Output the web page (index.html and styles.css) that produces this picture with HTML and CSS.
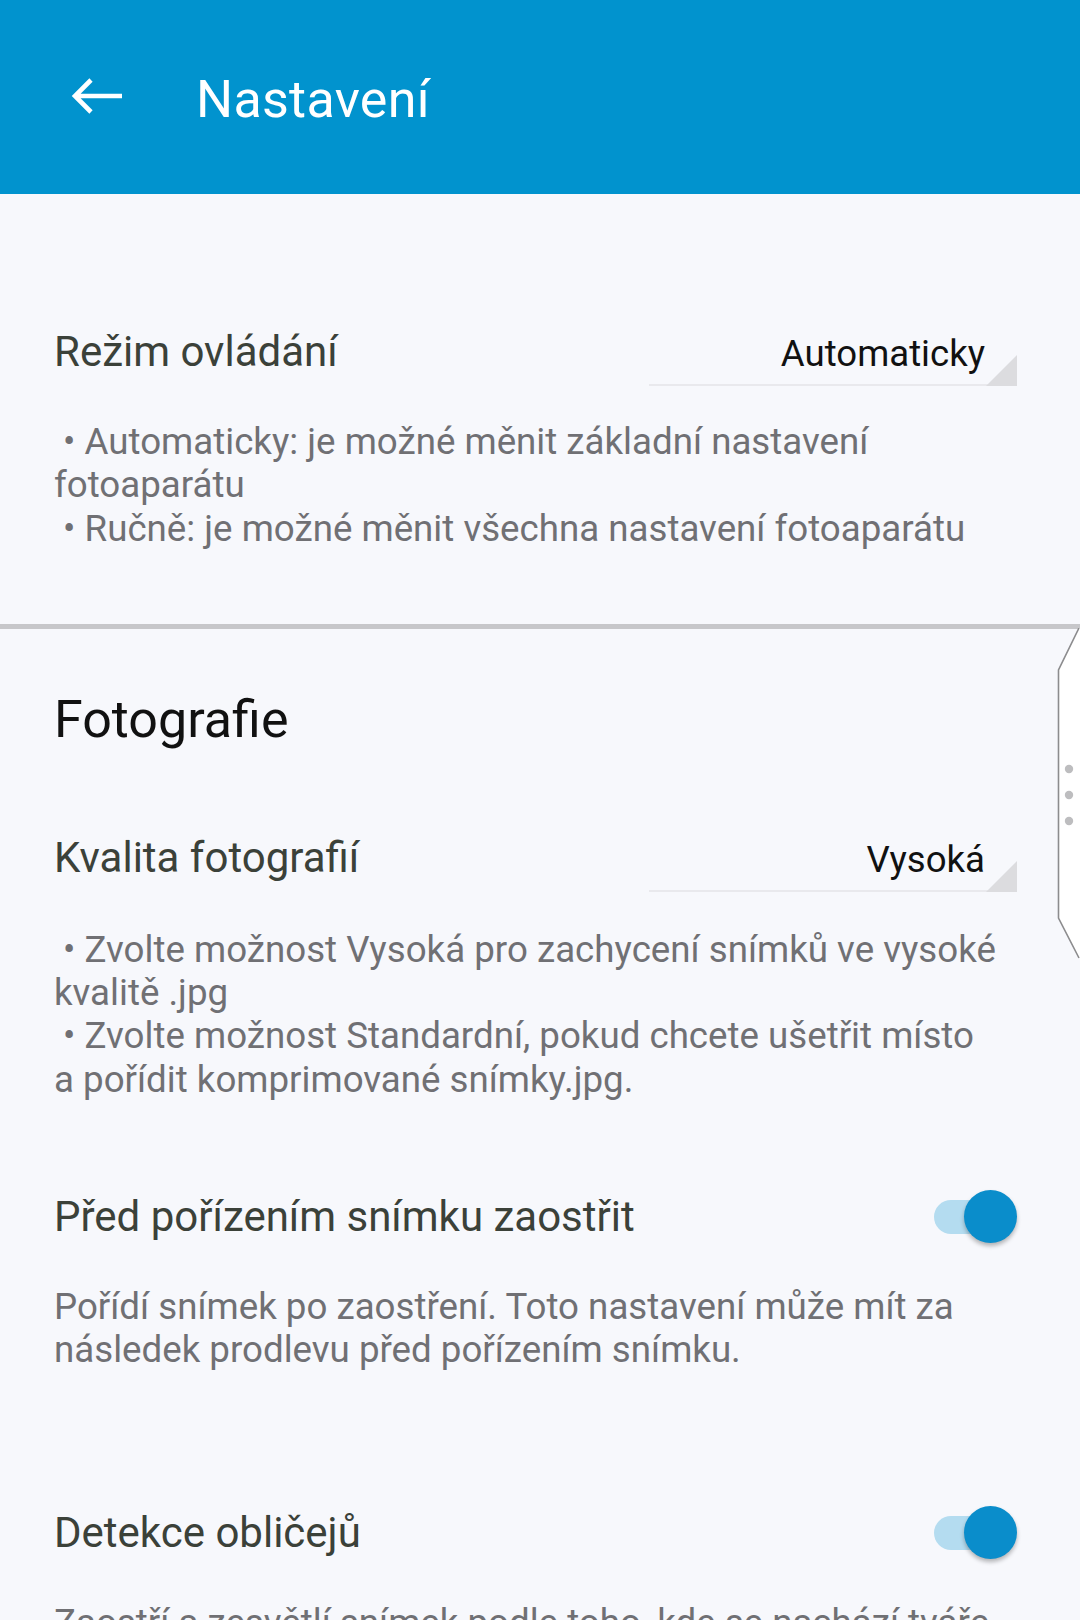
FILE: index.html
```html
<!DOCTYPE html>
<html lang="cs">
<head>
<meta charset="utf-8">
<title>Nastavení</title>
<link rel="stylesheet" href="styles.css">
</head>
<body>
<header class="appbar">
  <svg class="back" width="56" height="40" viewBox="0 0 56 40" aria-hidden="true">
    <path d="M52 20 H5 M21 4 L5 20 L21 36" fill="none" stroke="#ffffff" stroke-width="4.6" stroke-linecap="butt" stroke-linejoin="miter"/>
  </svg>
  <h1 class="title">Nastavení</h1>
</header>

<main class="content">
  <section class="block block-first">
    <div class="row row-select">
      <div class="label">Režim ovládání</div>
      <div class="select"><span class="value">Automaticky</span></div>
    </div>
    <p class="desc desc-first">&nbsp;• Automaticky: je možné měnit základní nastavení<br>fotoaparátu<br>&nbsp;• Ručně: je možné měnit všechna nastavení fotoaparátu</p>
  </section>

  <hr class="divider">

  <section class="block">
    <h2 class="heading">Fotografie</h2>
    <div class="row row-select row-after-heading">
      <div class="label">Kvalita fotografií</div>
      <div class="select"><span class="value">Vysoká</span></div>
    </div>
    <p class="desc desc-select">&nbsp;• Zvolte možnost Vysoká pro zachycení snímků ve vysoké<br>kvalitě .jpg<br>&nbsp;• Zvolte možnost Standardní, pokud chcete ušetřit místo<br>a pořídit komprimované snímky.jpg.</p>

    <div class="row row-toggle row-focus">
      <div class="label">Před pořízením snímku zaostřit</div>
      <div class="toggle"><span class="track"></span><span class="thumb"></span></div>
    </div>
    <p class="desc desc-toggle">Pořídí snímek po zaostření. Toto nastavení může mít za<br>následek prodlevu před pořízením snímku.</p>

    <div class="row row-toggle row-face">
      <div class="label">Detekce obličejů</div>
      <div class="toggle"><span class="track"></span><span class="thumb"></span></div>
    </div>
    <p class="desc desc-toggle desc-last">Zaostří a zesvětlí snímek podle toho, kde se nachází tváře</p>
  </section>
</main>

<svg class="edge-handle" width="24" height="340" viewBox="0 0 24 340" aria-hidden="true">
  <path d="M23 0 L2.5 42 L2.5 290 L23 330 L24 330 L24 0 Z" fill="#ffffff"/>
  <path d="M23 0 L2.5 42 L2.5 290 L23 330" fill="none" stroke="#8c8c8e" stroke-width="1.6"/>
  <circle cx="13" cy="141" r="4.2" fill="#bdbdbf"/>
  <circle cx="13" cy="167" r="4.2" fill="#bdbdbf"/>
  <circle cx="13" cy="193" r="4.2" fill="#bdbdbf"/>
</svg>
</body>
</html>
```

FILE: styles.css
```css
html, body {
  margin: 0;
  padding: 0;
}

body {
  width: 1080px;
  height: 1620px;
  overflow: hidden;
  background: #f7f8fc;
  font-family: Roboto, "Noto Sans", "Liberation Sans", sans-serif;
  position: relative;
}

.appbar {
  height: 194px;
  background: #0193ce;
  display: flex;
  align-items: center;
}

.back {
  display: block;
  margin-left: 70px;
  margin-top: -2px;
}

.title {
  margin: 6px 0 0 70px;
  font-size: 52px;
  font-weight: 400;
  color: #ffffff;
  line-height: 60px;
  letter-spacing: 0.3px;
}

.content {
  padding: 0;
}

.block {
  padding: 0 63px 0 54px;
}

.row {
  display: flex;
  justify-content: space-between;
}

.row-select {
  align-items: baseline;
}

.row-toggle {
  align-items: center;
}

.block-first .row-select {
  padding-top: 133px;
}

.label {
  font-size: 42px;
  line-height: 50px;
  color: #3b4139;
}

.select {
  position: relative;
  width: 336px;
  padding-right: 32px;
  padding-bottom: 8px;
  border-bottom: 2px solid #e9e9ed;
  text-align: right;
  font-size: 36.6px;
  line-height: 44px;
  color: #111111;
}

.select::after {
  content: "";
  position: absolute;
  right: 0;
  bottom: -2px;
  width: 31px;
  height: 31px;
  background: #dcdcdf;
  clip-path: polygon(100% 0, 100% 100%, 0 100%);
}

.desc {
  margin: 0;
  font-size: 36.7px;
  line-height: 43.3px;
  color: #707074;
}

.desc-first {
  margin-top: 34px;
}

.divider {
  margin: 74px 0 0 0;
  height: 5px;
  border: 0;
  background: #c7c7ca;
}

.heading {
  margin: 61px 0 0 0;
  font-size: 52px;
  line-height: 60px;
  font-weight: 400;
  color: #111111;
}

.row-after-heading {
  margin-top: 83px;
}

.desc-select {
  margin-top: 36px;
}

.row-focus {
  margin-top: 88px;
}

.desc-toggle {
  margin-top: 40px;
}

.row-face {
  margin-top: 133px;
}

.desc-last {
  margin-top: 40px;
  white-space: nowrap;
}

.toggle {
  position: relative;
  width: 83px;
  height: 56px;
  flex: none;
}

.track {
  position: absolute;
  left: 0;
  top: 11px;
  width: 72px;
  height: 34px;
  border-radius: 17px;
  background: #b4dcf0;
}

.thumb {
  position: absolute;
  right: 0;
  top: 1px;
  width: 53px;
  height: 53px;
  border-radius: 50%;
  background: #0a8dcb;
  box-shadow: 0 3px 4px rgba(0, 0, 0, 0.28);
}

.edge-handle {
  position: absolute;
  right: 0;
  top: 628px;
  display: block;
}
```
